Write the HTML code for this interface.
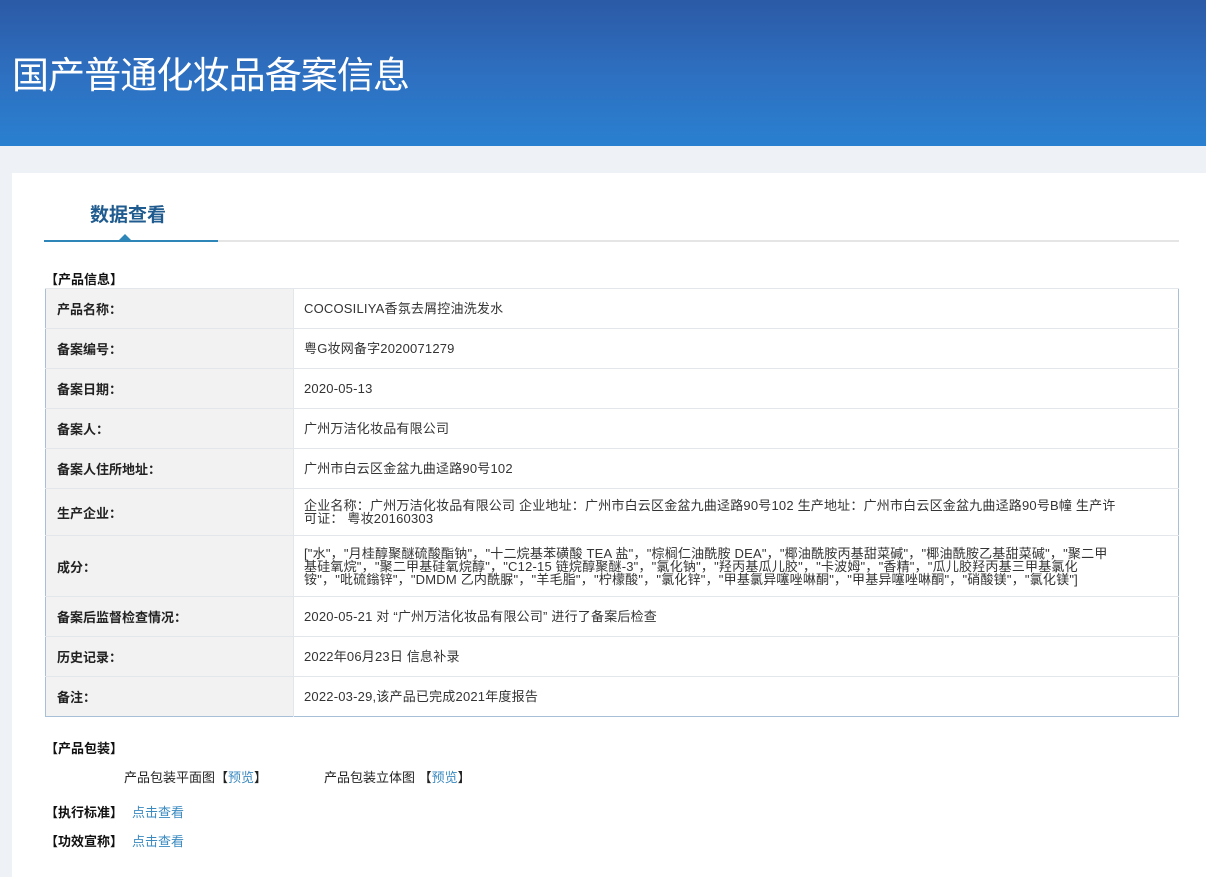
<!DOCTYPE html>
<html><head><meta charset="utf-8"><style>
*{margin:0;padding:0;box-sizing:border-box}
body{width:1206px;height:877px;overflow:hidden;background:#eef1f5;font-family:"Liberation Sans","Noto Sans CJK SC",sans-serif;color:#333;position:relative}
.hdr{position:absolute;left:0;top:0;width:1206px;height:146px;background:linear-gradient(180deg,#2b5aa6 0%,#2e6fc0 50%,#2a80d0 100%);overflow:hidden}
.hdr h1{position:absolute;left:12px;top:50px;font-size:37px;font-weight:normal;color:#fff;letter-spacing:-0.9px;font-family:"Noto Sans CJK SC",sans-serif;line-height:44px}
.panel{position:absolute;left:12px;top:173px;width:1194px;height:704px;background:#fff}
.tab{position:absolute;left:90px;top:200px;font-size:19px;font-weight:bold;color:#1f5b8e;font-family:"Noto Sans CJK SC",sans-serif}
.line{position:absolute;left:44px;top:240px;width:1135px;height:2px;background:#e5e5e5}
.line2{position:absolute;left:44px;top:240px;width:174px;height:2px;background:#2e86b8}
.tri{position:absolute;left:119px;top:234px;width:0;height:0;border-left:6px solid transparent;border-right:6px solid transparent;border-bottom:6px solid #2e86b8}
.sec{position:absolute;font-size:13px;font-weight:bold;color:#111;font-family:"Noto Sans CJK SC",sans-serif}
table{position:absolute;left:45px;top:288px;width:1134px;border-collapse:collapse;border:1px solid #a8bfd8;font-size:13px}
td{border-top:1px solid #e3e6ea;vertical-align:middle}
td.l{width:248px;background:#f2f2f2;font-weight:bold;padding-left:11px;color:#222;border-right:1px solid #e3e6ea}
td.v{padding-left:10px;color:#333;line-height:13px;letter-spacing:0.2px}
.lk{color:#3a8ac0}
.t{position:absolute;font-size:13px;color:#222}
</style></head><body>
<div class="hdr"><h1>国产普通化妆品备案信息</h1></div>
<div class="panel"></div>
<div class="tab">数据查看</div>
<div class="line"></div><div class="line2"></div><div class="tri"></div>
<div class="sec" style="left:45px;top:269px">【产品信息】</div>
<table>
<tr style="height:40px"><td class="l">产品名称：</td><td class="v">COCOSILIYA香氛去屑控油洗发水</td></tr>
<tr style="height:40px"><td class="l">备案编号：</td><td class="v">粤G妆网备字2020071279</td></tr>
<tr style="height:40px"><td class="l">备案日期：</td><td class="v">2020-05-13</td></tr>
<tr style="height:40px"><td class="l">备案人：</td><td class="v">广州万洁化妆品有限公司</td></tr>
<tr style="height:40px"><td class="l">备案人住所地址：</td><td class="v">广州市白云区金盆九曲迳路90号102</td></tr>
<tr style="height:47px"><td class="l">生产企业：</td><td class="v" style="padding-right:62px">企业名称：广州万洁化妆品有限公司 企业地址：广州市白云区金盆九曲迳路90号102 生产地址：广州市白云区金盆九曲迳路90号B幢 生产许可证： 粤妆20160303</td></tr>
<tr style="height:61px"><td class="l">成分：</td><td class="v" style="padding-right:62px">["水"，"月桂醇聚醚硫酸酯钠"，"十二烷基苯磺酸 TEA 盐"，"棕榈仁油酰胺 DEA"，"椰油酰胺丙基甜菜碱"，"椰油酰胺乙基甜菜碱"，"聚二甲基硅氧烷"，"聚二甲基硅氧烷醇"，"C12-15 链烷醇聚醚-3"，"氯化钠"，"羟丙基瓜儿胶"，"卡波姆"，"香精"，"瓜儿胶羟丙基三甲基氯化铵"，"吡硫鎓锌"，"DMDM 乙内酰脲"，"羊毛脂"，"柠檬酸"，"氯化锌"，"甲基氯异噻唑啉酮"，"甲基异噻唑啉酮"，"硝酸镁"，"氯化镁"]</td></tr>
<tr style="height:40px"><td class="l">备案后监督检查情况：</td><td class="v">2020-05-21 对 “广州万洁化妆品有限公司” 进行了备案后检查</td></tr>
<tr style="height:40px"><td class="l">历史记录：</td><td class="v">2022年06月23日 信息补录</td></tr>
<tr style="height:40px"><td class="l">备注：</td><td class="v">2022-03-29,该产品已完成2021年度报告</td></tr>
</table>
<div class="sec" style="left:45px;top:738px">【产品包装】</div>
<div class="t" style="left:124px;top:767px">产品包装平面图【<span class="lk">预览</span>】</div>
<div class="t" style="left:324px;top:767px">产品包装立体图 【<span class="lk">预览</span>】</div>
<div class="sec" style="left:45px;top:802px">【执行标准】 <span class="lk" style="font-weight:normal;margin-left:6px">点击查看</span></div>
<div class="sec" style="left:45px;top:831px">【功效宣称】 <span class="lk" style="font-weight:normal;margin-left:6px">点击查看</span></div>
</body></html>
